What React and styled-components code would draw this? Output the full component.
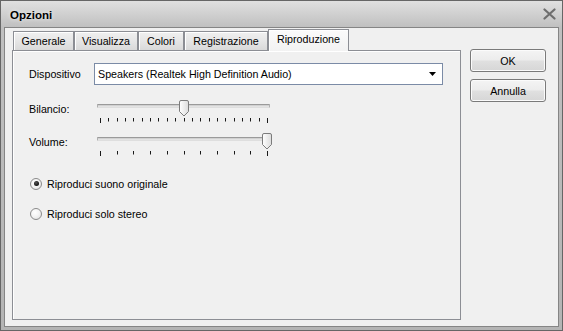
import React from "react";
import styled, { createGlobalStyle } from "styled-components";

const Global = createGlobalStyle`
  html, body { margin: 0; padding: 0; background: #ffffff; }
  body { font-family: "Liberation Sans", Arial, sans-serif; }
  * { box-sizing: border-box; }
`;

const Window = styled.div`
  width: 563px;
  height: 331px;
  border: 1px solid #666666;
  background: linear-gradient(to bottom, #e0e0e0 0px, #c0c0c0 26px, #b4b4b4 100%);
  display: flex;
  flex-direction: column;
  font-size: 10.7px;
  color: #000;
`;

const TitleBar = styled.div`
  height: 26px;
  flex: none;
  display: flex;
  align-items: center;
  justify-content: space-between;
  padding: 2px 6px 0 9px;
`;

const Title = styled.div`
  font-weight: bold;
  font-size: 11.5px;
  color: #000;
  text-shadow: 0 0 4px rgba(255, 255, 255, 0.8);
`;

const Close = styled.svg`
  display: block;
  margin-top: -2px;
`;

const Body = styled.div`
  flex: 1;
  margin: 0 3px 3px 3px;
  border: 1px solid #858585;
  background: #f0f0f0;
  display: flex;
  gap: 9px;
  padding: 1px 12px 6px 7px;
`;

const TabsArea = styled.div`
  width: 449px;
  display: flex;
  flex-direction: column;
`;

const TabStrip = styled.div`
  display: flex;
  align-items: flex-end;
  height: 21px;
  padding-left: 1px;
  position: relative;
  z-index: 1;
`;

const Tab = styled.div`
  width: ${(p) => p.$w}px;
  height: ${(p) => (p.$active ? 22 : 19)}px;
  margin-bottom: ${(p) => (p.$active ? -1 : 0)}px;
  border: 1px solid #8c8e94;
  border-bottom: none;
  background: ${(p) =>
    p.$active
      ? "linear-gradient(to bottom, #fbfbfb, #f2f2f2)"
      : "linear-gradient(to bottom, #f0f0f0 0%, #e6e6e6 50%, #d9d9d9 100%)"};
  box-shadow: inset 1px 1px 0 #ffffff;
  display: flex;
  align-items: center;
  justify-content: center;
  padding-bottom: ${(p) => (p.$active ? 3 : 0)}px;
  white-space: nowrap;
`;

const Panel = styled.div`
  flex: 1;
  border: 1px solid #8c8e94;
  background: #f0f0f0;
  box-shadow: inset 1px 1px 0 #ffffff;
  padding: 12px 16px 0 16px;
  display: flex;
  flex-direction: column;
`;

const FieldRow = styled.div`
  display: flex;
  align-items: ${(p) => (p.$top ? "flex-start" : "center")};
  margin-top: ${(p) => p.$mt || 0}px;
  height: ${(p) => p.$h}px;
`;

const Label = styled.div`
  width: ${(p) => p.$w}px;
  flex: none;
  line-height: 18px;
  white-space: nowrap;
`;

const Select = styled.div`
  width: 349px;
  height: 22px;
  border: 1px solid #7b8ba6;
  background: #ffffff;
  display: flex;
  align-items: center;
  justify-content: space-between;
  padding: 0 6px 0 3px;
`;

const SelectText = styled.span`
  white-space: nowrap;
`;

const Slider = styled.div`
  position: relative;
  width: 173px;
  height: 23px;
`;

const Track = styled.div`
  position: absolute;
  left: 0;
  right: 0;
  top: 4px;
  height: 4px;
  border: 1px solid #b0b0b0;
  border-top-color: #9a9a9a;
  border-bottom-color: #dedede;
  background: linear-gradient(to bottom, #c8c8c8, #ececec);
  border-radius: 1px;
`;

const ThumbSvg = styled.svg`
  position: absolute;
  top: 0;
  display: block;
`;

const TickSvg = styled.svg`
  position: absolute;
  left: 0;
  top: 18px;
  display: block;
`;

const RadioRow = styled.div`
  display: flex;
  align-items: center;
  gap: 5px;
  margin-top: ${(p) => p.$mt}px;
  padding-left: 1px;
  height: 13px;
`;

const RadioCircle = styled.span`
  width: 12px;
  height: 12px;
  border-radius: 50%;
  border: 1px solid #8a8a8a;
  background: radial-gradient(circle at 40% 35%, #ffffff 0%, #f4f4f4 45%, #dcdcdc 100%);
  display: flex;
  align-items: center;
  justify-content: center;
  flex: none;
  &::after {
    content: "";
    display: ${(p) => (p.$checked ? "block" : "none")};
    width: 5px;
    height: 5px;
    border-radius: 50%;
    background: radial-gradient(circle at 40% 35%, #555 0%, #111 70%);
  }
`;

const RadioText = styled.span`
  white-space: nowrap;
`;

const ButtonColumn = styled.div`
  display: flex;
  flex-direction: column;
  gap: 7px;
  padding-top: 20px;
`;

const Button = styled.div`
  width: 76px;
  height: 23px;
  border: 1px solid #7a7a7a;
  border-radius: 3px;
  background: linear-gradient(to bottom, #f4f4f4 0%, #ececec 48%, #e0e0e0 52%, #d6d6d6 100%);
  box-shadow: inset 0 0 0 1px #fbfbfb;
  display: flex;
  align-items: center;
  justify-content: center;
`;

function Thumb({ pct }) {
  const center = 3 + pct * 167;
  return (
    <ThumbSvg
      width="10"
      height="17"
      viewBox="0 0 10 17"
      style={{ left: `${center - 5}px` }}
    >
      <defs>
        <linearGradient id="tg" x1="0" y1="0" x2="1" y2="0">
          <stop offset="0" stopColor="#ffffff" />
          <stop offset="1" stopColor="#dcdcdc" />
        </linearGradient>
      </defs>
      <path
        d="M0.5 2 Q0.5 0.5 2 0.5 H8 Q9.5 0.5 9.5 2 V11.5 L5 16 L0.5 11.5 Z"
        fill="url(#tg)"
        stroke="#7c7c7c"
        strokeWidth="1"
      />
    </ThumbSvg>
  );
}

function Ticks({ count }) {
  const lines = [];
  for (let i = 0; i < count; i++) {
    const x = Math.round(3 + (i * 167) / (count - 1)) + 0.5;
    const end = i === 0 || i === count - 1;
    lines.push(
      <line key={i} x1={x} y1="0" x2={x} y2={end ? 5 : 3.5} stroke="#1a1a1a" strokeWidth="1" />
    );
  }
  return (
    <TickSvg width="173" height="6" viewBox="0 0 173 6">
      {lines}
    </TickSvg>
  );
}

function TrackBar({ pct, ticks }) {
  return (
    <Slider>
      <Track />
      <Ticks count={ticks} />
      <Thumb pct={pct} />
    </Slider>
  );
}

const tabs = [
  { label: "Generale", w: 61 },
  { label: "Visualizza", w: 64 },
  { label: "Colori", w: 46 },
  { label: "Registrazione", w: 84 },
  { label: "Riproduzione", w: 81, active: true },
];

export default function App() {
  return (
    <>
      <Global />
      <Window>
        <TitleBar>
          <Title>Opzioni</Title>
          <Close width="13" height="12" viewBox="0 0 13 12">
            <path d="M1.5 1.5 L11.5 10.5 M11.5 1.5 L1.5 10.5" stroke="#6e6e6e" strokeWidth="2.2" strokeLinecap="round" />
          </Close>
        </TitleBar>
        <Body>
          <TabsArea>
            <TabStrip>
              {tabs.map((t) => (
                <Tab key={t.label} $w={t.w} $active={t.active}>
                  {t.label}
                </Tab>
              ))}
            </TabStrip>
            <Panel>
              <FieldRow $h={22}>
                <Label $w={65}>Dispositivo</Label>
                <Select>
                  <SelectText>Speakers (Realtek High Definition Audio)</SelectText>
                  <svg width="7" height="4" viewBox="0 0 7 4">
                    <path d="M0 0 H7 L3.5 4 Z" fill="#000" />
                  </svg>
                </Select>
              </FieldRow>
              <FieldRow $h={23} $mt={15} $top>
                <Label $w={68}>Bilancio:</Label>
                <TrackBar pct={0.5} ticks={21} />
              </FieldRow>
              <FieldRow $h={23} $mt={10} $top>
                <Label $w={68}>Volume:</Label>
                <TrackBar pct={1} ticks={11} />
              </FieldRow>
              <RadioRow $mt={21}>
                <RadioCircle $checked />
                <RadioText>Riproduci suono originale</RadioText>
              </RadioRow>
              <RadioRow $mt={17}>
                <RadioCircle />
                <RadioText>Riproduci solo stereo</RadioText>
              </RadioRow>
            </Panel>
          </TabsArea>
          <ButtonColumn>
            <Button>OK</Button>
            <Button>Annulla</Button>
          </ButtonColumn>
        </Body>
      </Window>
    </>
  );
}
